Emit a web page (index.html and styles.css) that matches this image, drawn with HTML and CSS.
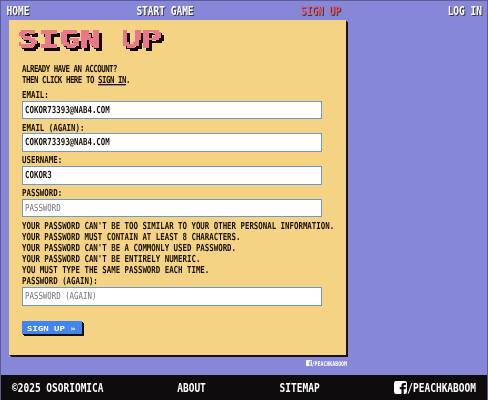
FILE: index.html
```html
<!DOCTYPE html>
<html lang="en">
<head>
<meta charset="utf-8">
<title>Sign up</title>
<link rel="stylesheet" href="styles.css">
</head>
<body>
<svg class="defs" aria-hidden="true">
  <symbol id="fb" viewBox="0 0 12 12"><path fill-rule="evenodd" d="M2 0h8a2 2 0 0 1 2 2v8a2 2 0 0 1-2 2H9V7.6h1.6l.3-2H9V4.5q0-.9 1-.9h1V1.9H9.2Q6.9 1.9 6.9 4.2v1.4H5.3v2h1.6V12H2a2 2 0 0 1-2-2V2a2 2 0 0 1 2-2z"/></symbol>
  <filter id="blocks" filterUnits="userSpaceOnUse" x="0" y="0" width="180" height="46" color-interpolation-filters="sRGB">
    <feFlood x="0" y="0" width="1" height="1" flood-color="#000" result="dot"/>
    <feOffset in="dot" x="0" y="0" width="2" height="2"/>
    <feTile x="0" y="0" width="180" height="46" result="grid"/>
    <feComposite in="SourceAlpha" in2="grid" operator="in" result="a"/>
    <feOffset in="a" dx="1" dy="0" result="b"/>
    <feOffset in="a" dx="0" dy="1" result="c"/>
    <feOffset in="a" dx="1" dy="1" result="d"/>
    <feMerge><feMergeNode in="a"/><feMergeNode in="b"/><feMergeNode in="c"/><feMergeNode in="d"/></feMerge>
    <feComponentTransfer result="shape"><feFuncA type="discrete" tableValues="0 1"/></feComponentTransfer>
    <feFlood flood-color="#e9778a"/>
    <feComposite in2="shape" operator="in"/>
  </filter>
</svg>
<nav class="nav">
  <a><span class="tall">HOME</span></a>
  <a><span class="tall">START GAME</span></a>
  <a class="active"><span class="tall">SIGN UP</span></a>
  <a><span class="tall">LOG IN</span></a>
</nav>
<main>
  <section class="panel">
    <h1><span>SIGN UP</span></h1>
    <p class="intro"><span class="tall">ALREADY HAVE AN ACCOUNT?</span></p>
    <p class="intro second"><span class="tall">THEN CLICK HERE TO <a class="link">SIGN IN</a>.</span></p>
    <form>
      <div class="label"><span class="tall">EMAIL:</span></div>
      <div class="field"><span class="tall">COKOR73393@NAB4.COM</span></div>
      <div class="label"><span class="tall">EMAIL (AGAIN):</span></div>
      <div class="field"><span class="tall">COKOR73393@NAB4.COM</span></div>
      <div class="label"><span class="tall">USERNAME:</span></div>
      <div class="field"><span class="tall">COKOR3</span></div>
      <div class="label"><span class="tall">PASSWORD:</span></div>
      <div class="field empty"><span class="tall">PASSWORD</span></div>
      <div class="help">
        <p><span class="tall">YOUR PASSWORD CAN'T BE TOO SIMILAR TO YOUR OTHER PERSONAL INFORMATION.</span></p>
        <p><span class="tall">YOUR PASSWORD MUST CONTAIN AT LEAST 8 CHARACTERS.</span></p>
        <p><span class="tall">YOUR PASSWORD CAN'T BE A COMMONLY USED PASSWORD.</span></p>
        <p><span class="tall">YOUR PASSWORD CAN'T BE ENTIRELY NUMERIC.</span></p>
        <p><span class="tall">YOU MUST TYPE THE SAME PASSWORD EACH TIME.</span></p>
        <p><span class="tall">PASSWORD (AGAIN):</span></p>
      </div>
      <div class="field empty"><span class="tall">PASSWORD (AGAIN)</span></div>
      <div class="button"><span>SIGN UP »</span></div>
    </form>
  </section>
  <div class="credit"><svg><use href="#fb"/></svg><span class="tall">/PEACHKABOOM</span></div>
</main>
<footer class="footer">
  <span class="tall">©2025 OSORIOMICA</span>
  <span class="tall">ABOUT</span>
  <span class="tall">SITEMAP</span>
  <span class="social"><svg><use href="#fb"/></svg><span class="tall">/PEACHKABOOM</span></span>
</footer>
</body>
</html>
```
FILE: styles.css
```css
* { box-sizing: border-box; }
body {
  margin: 0;
  width: 488px;
  height: 400px;
  overflow: hidden;
  display: flex;
  flex-direction: column;
  background: #8787d9;
  border: 1px solid #5d5c95;
  border-bottom: 0;
  font-family: "DejaVu Sans Mono", "Liberation Mono", monospace;
  font-weight: bold;
  font-size: 7.42px;
  color: #171006;
}
.defs { position: absolute; width: 0; height: 0; }
h1, p { margin: 0; white-space: pre; }
.tall { display: inline-block; transform: scaleY(1.3); white-space: pre; }
.nav {
  display: flex;
  justify-content: space-between;
  height: 19px;
  padding: 0 5px 0 5.5px;
  line-height: 19px;
  font-size: 9.5px;
  color: #fff;
  text-shadow: 1px 1px 0 #39364f;
}
.nav .active { color: #e0606f; }
main { flex: 1; padding-left: 8px; }
.panel {
  width: 337px;
  height: 335px;
  padding-left: 13px;
  background: #f5d385;
  box-shadow: 1px 1px 0 #17120f, 2px 2px 0 #17120f;
}
h1 {
  height: 43px;
  margin-left: -5px;
  font-size: 34.3px;
  line-height: 37px;
  filter: url(#blocks) drop-shadow(3px 3px 0 #130b0b);
}
h1 span {
  display: inline-block;
  -webkit-text-stroke: .8px #000;
  transform: scaleY(.74);
}
.intro { height: 11px; line-height: 11px; letter-spacing: -.5px; }
.intro.second { letter-spacing: -.5px; word-spacing: .2px; }
.link { text-decoration: underline; text-underline-offset: 1px; }
form { padding-top: 5px; }
.label { height: 10.5px; line-height: 10.5px; }
.field {
  width: 300px;
  height: 18.7px;
  margin-bottom: 3.5px;
  padding-left: 2px;
  border: 1px solid #6a9bd0;
  background: #fff;
  line-height: 16px;
}
.empty { color: #777; font-weight: normal; }
.help { padding-top: .5px; }
.help p { height: 10.95px; line-height: 10.5px; }
.button {
  width: 59.5px;
  height: 13px;
  margin-top: 15.5px;
  padding-left: 5px;
  background: #4385ef;
  box-shadow: 1px 1px 0 #14100c, 2px 2px 0 #14100c;
  color: #fff;
  font-size: 9px;
  line-height: 14px;
}
.button span { display: inline-block; white-space: pre; transform: scaleY(.85); }
.credit {
  display: flex;
  align-items: center;
  justify-content: flex-end;
  width: 338px;
  height: 8px;
  margin-top: 4px;
  color: #fff;
  font-size: 4.9px;
  line-height: 8px;
}
.credit svg { width: 6px; height: 6px; fill: #fff; }
.footer {
  display: flex;
  justify-content: space-between;
  align-items: center;
  height: 25px;
  margin: 0 -1px;
  padding: 0 12px;
  background: #0e0c0d;
  color: #fff;
  font-size: 9.5px;
  line-height: 24px;
}
.footer > :nth-child(2), .footer > :nth-child(3) { margin-left: -2px; }
.social { display: flex; align-items: center; }
.social svg { width: 13px; height: 13px; margin-left: -1px; fill: #fff; }
```
